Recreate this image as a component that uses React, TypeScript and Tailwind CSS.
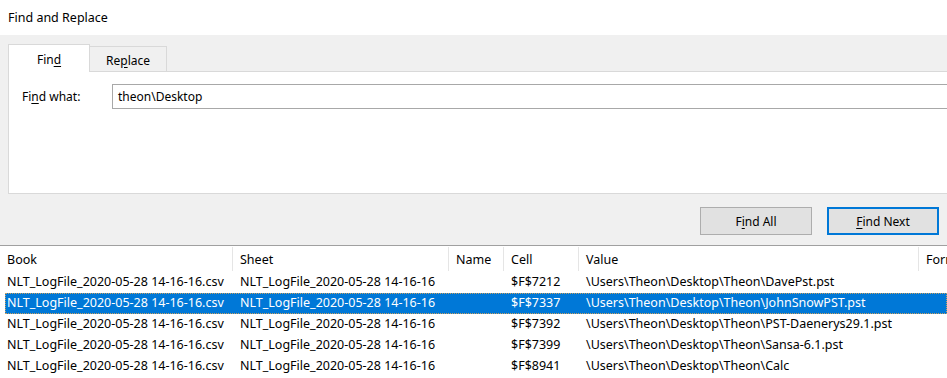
import React from "react";

type Row = { book: string; sheet: string; cell: string; value: string };

const rows: Row[] = [
  { book: "NLT_LogFile_2020-05-28 14-16-16.csv", sheet: "NLT_LogFile_2020-05-28 14-16-16", cell: "$F$7212", value: "\\Users\\Theon\\Desktop\\Theon\\DavePst.pst" },
  { book: "NLT_LogFile_2020-05-28 14-16-16.csv", sheet: "NLT_LogFile_2020-05-28 14-16-16", cell: "$F$7337", value: "\\Users\\Theon\\Desktop\\Theon\\JohnSnowPST.pst" },
  { book: "NLT_LogFile_2020-05-28 14-16-16.csv", sheet: "NLT_LogFile_2020-05-28 14-16-16", cell: "$F$7392", value: "\\Users\\Theon\\Desktop\\Theon\\PST-Daenerys29.1.pst" },
  { book: "NLT_LogFile_2020-05-28 14-16-16.csv", sheet: "NLT_LogFile_2020-05-28 14-16-16", cell: "$F$7399", value: "\\Users\\Theon\\Desktop\\Theon\\Sansa-6.1.pst" },
  { book: "NLT_LogFile_2020-05-28 14-16-16.csv", sheet: "NLT_LogFile_2020-05-28 14-16-16", cell: "$F$8941", value: "\\Users\\Theon\\Desktop\\Theon\\Calc" },
];

// column widths taken from the header separators
const cols = [
  { label: "Book", w: "w-[233px]" },
  { label: "Sheet", w: "w-[216px]" },
  { label: "Name", w: "w-[55px]" },
  { label: "Cell", w: "w-[75px]" },
  { label: "Value", w: "w-[340px]" },
  { label: "Formula", w: "w-[60px]" },
];

const U = ({ children }: { children: React.ReactNode }) => (
  <span className="underline underline-offset-2">{children}</span>
);

export default function App() {
  return (
    <div className="w-[947px] h-[378px] overflow-hidden bg-[#f0f0f0] text-[12px] text-black [font-family:'Noto_Sans',sans-serif]">
      {/* Title */}
      <div className="h-[35px] bg-white flex items-center pl-[8px] pt-[2px] text-[12.5px]">Find and Replace</div>

      {/* Tabs */}
      <div className="pt-[9px] pl-[8px] flex items-end">
        <div className="w-[82px] h-[28px] bg-white border border-b-0 border-[#d9d9d9] flex items-center justify-center pt-[3px] relative z-10 -mb-px">
          Fin<U>d</U>
        </div>
        <div className="w-[77px] h-[25px] border border-l-0 border-b-0 border-[#d9d9d9] flex items-center justify-center pt-[3px]">
          Re<U>p</U>lace
        </div>
      </div>

      {/* Tab panel */}
      <div className="ml-[8px] h-[123px] bg-white border border-r-0 border-[#d9d9d9] pt-[12px]">
        <div className="flex items-center">
          <div className="w-[103px] pl-[13px]">
            Fi<U>n</U>d what:
          </div>
          <div className="flex-1 h-[25px] border border-r-0 border-[#a8a8a8] flex items-center pl-[5px]">
            theon\Desktop
          </div>
        </div>
      </div>

      {/* Buttons */}
      <div className="h-[51px] flex items-start justify-end pt-[13px] pr-[8px] gap-[15px]">
        <button className="w-[112px] h-[28px] bg-[#e1e1e1] border border-[#adadad] pt-px">
          F<U>i</U>nd All
        </button>
        <button className="w-[112px] h-[28px] bg-[#e1e1e1] border-2 border-[#0078d7] pt-px">
          <U>F</U>ind Next
        </button>
      </div>

      {/* Results list */}
      <div className="bg-white border-t border-[#a0a0a0] h-[133px] text-[12.5px]">
        <div className="flex h-[26px] items-center">
          {cols.map((c, i) => (
            <div
              key={c.label}
              className={`${c.w} shrink-0 h-[24px] flex items-center pl-[7px] pt-[2px] whitespace-nowrap ${i < cols.length - 1 ? "border-r border-[#e5e5e5]" : ""}`}
            >
              {c.label}
            </div>
          ))}
        </div>
        {rows.map((r, i) => {
          const sel = i === 1;
          return (
            <div
              key={r.cell}
              className={`flex h-[21px] items-center whitespace-nowrap ${sel ? "ml-[5px] bg-[#0078d7] text-white outline-1 outline-dotted outline-[#c8a060] -outline-offset-1" : ""}`}
            >
              <div className={`${sel ? "w-[228px] pl-[2px]" : "w-[233px] pl-[7px]"} shrink-0`}>{r.book}</div>
              <div className="w-[216px] shrink-0 pl-[7px]">{r.sheet}</div>
              <div className="w-[55px] shrink-0" />
              <div className="w-[75px] shrink-0 pl-[7px]">{r.cell}</div>
              <div className="w-[340px] shrink-0 pl-[7px]">{r.value}</div>
            </div>
          );
        })}
      </div>
    </div>
  );
}
